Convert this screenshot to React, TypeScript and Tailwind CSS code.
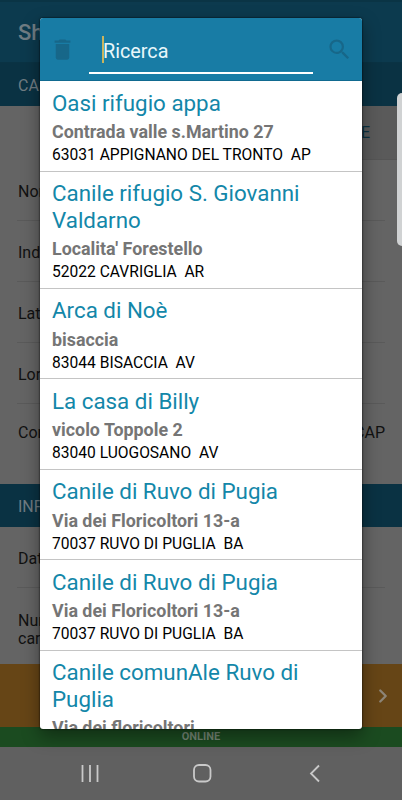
import { ChevronRight } from "lucide-react";
import { MdDelete, MdSearch } from "react-icons/md";

const shelters = [
  { name: "Oasi rifugio appa", street: "Contrada valle s.Martino 27", city: "63031 APPIGNANO DEL TRONTO  AP" },
  { name: "Canile rifugio S. Giovanni Valdarno", street: "Localita' Forestello", city: "52022 CAVRIGLIA  AR" },
  { name: "Arca di Noè", street: "bisaccia", city: "83044 BISACCIA  AV" },
  { name: "La casa di Billy", street: "vicolo Toppole 2", city: "83040 LUOGOSANO  AV" },
  { name: "Canile di Ruvo di Pugia", street: "Via dei Floricoltori 13-a", city: "70037 RUVO DI PUGLIA  BA" },
  { name: "Canile di Ruvo di Pugia", street: "Via dei Floricoltori 13-a", city: "70037 RUVO DI PUGLIA  BA" },
  { name: "Canile comunAle Ruvo di Puglia", street: "Via dei floricoltori", city: "" },
];

const SectionTitle = ({ children }: { children: string }) => (
  <div className="flex h-[43px] shrink-0 items-center bg-[#0a3243] pl-[18px] pt-[3px] text-[16px] text-[#707c82]">
    {children}
  </div>
);

const Field = ({ label }: { label: string }) => (
  <div className="mx-[17px] flex h-[61px] shrink-0 items-center border-b border-[#5a5a5a] pl-px pt-[4px] text-[16px] text-[#111]">
    {label}
  </div>
);

const FormPage = () => (
  <div className="flex h-full flex-col bg-[#646464]">
    <div className="flex h-[63px] shrink-0 items-center border-b border-[#0a3344] border-t-2 border-t-[#0a3445] bg-[#0c3a4e] pl-[18px] pt-px text-[22px] font-medium text-[#6f7c83]">
      Sh
    </div>
    <SectionTitle>CA</SectionTitle>
    <div className="flex h-[54px] shrink-0 justify-end">
      <div className="flex h-[54px] w-[200px] items-center justify-end border-b border-[#555] bg-[#5a5a5a] pr-[32px] pt-px text-[16px] text-[#0b3243]">
        E
      </div>
    </div>
    <Field label="Nor" />
    <Field label="Ind" />
    <Field label="Lat" />
    <Field label="Lor" />
    <div className="mx-[17px] flex h-[80px] shrink-0 items-start justify-between pl-px pt-[17px] text-[16px] leading-6 text-[#111]">
      <span>Cor</span>
      <span>CAP</span>
    </div>
    <SectionTitle>INF</SectionTitle>
    <Field label="Dat" />
    <div className="flex h-[76px] shrink-0 flex-col justify-center pl-[18px] pt-[7px] text-[16px] leading-[18px] text-[#111]">
      <span>Nur</span>
      <span>car</span>
    </div>
    <div className="flex h-[63px] shrink-0 items-center justify-end bg-[#664516] pr-[8px]">
      <ChevronRight className="h-[22px] w-[22px] text-[#8d8577]" strokeWidth={2.5} />
    </div>
    <div className="flex h-[20px] shrink-0 items-center justify-center bg-[#1b4b20] pt-px text-[11px] font-bold text-[#758876]">
      ONLINE
    </div>
    <div className="flex flex-1 items-center justify-center bg-[#606060]">
      <svg className="h-[53px] w-full" viewBox="0 0 402 53" fill="none" stroke="#c9c9c9" strokeWidth="1.8">
        <path d="M82.5 18v17M90 18v17M97.5 18v17" />
        <rect x="194" y="18" width="16.5" height="16.5" rx="5" />
        <path d="M319 18.5l-8 8 8 8" />
      </svg>
    </div>
  </div>
);

const SearchDialog = () => (
  <div className="absolute left-[40px] top-[18px] flex h-[711px] w-[322px] flex-col overflow-hidden rounded-[3px] bg-white shadow-[0_7px_18px_rgba(0,0,0,0.4),0_0_2px_#000]">
    <div className="flex h-[63px] shrink-0 items-start border-b border-[#116a90] bg-[#187ca5]">
      <MdDelete className="ml-[9px] mt-[18px] h-[27px] w-[27px] text-[#176789]" />
      <div className="ml-[13px] mt-[18px] flex h-[38px] w-[224px] items-start border-b-2 border-white pl-[13px]">
        <span className="h-[27px] w-[2px] bg-[#c9b45e]" />
        <span className="-ml-px mt-[3px] text-[19.8px] leading-[26px] text-[#e8f7fb]">Ricerca</span>
      </div>
      <MdSearch className="ml-[13px] mt-[18px] h-[27px] w-[27px] text-[#176789]" />
    </div>
    <div className="flex-1 overflow-hidden">
      {shelters.map((shelter, index) => (
        <div key={index} className="border-b border-[#c4c4c4] pb-[3.5px] pl-[12px] pr-[40px] pt-[8.5px]">
          <h2 className="text-[22.35px] leading-[26.5px] text-[#1387a9]">{shelter.name}</h2>
          <p className="mt-[4px] text-[17.85px] font-bold leading-[23px] text-[#757575]">{shelter.street}</p>
          <p className="mt-px whitespace-pre text-[15.6px] leading-[23px] text-black">{shelter.city}</p>
        </div>
      ))}
    </div>
  </div>
);

const App = () => {
  return (
    <div className="relative h-[800px] w-[402px] overflow-hidden font-['Roboto',sans-serif]">
      <FormPage />
      <SearchDialog />
      {/* Edge panel handle */}
      <div className="absolute right-0 top-[93px] h-[153px] w-[5px] rounded-l-[5px] bg-[#d0d2d3]" />
    </div>
  );
};

export default App;
